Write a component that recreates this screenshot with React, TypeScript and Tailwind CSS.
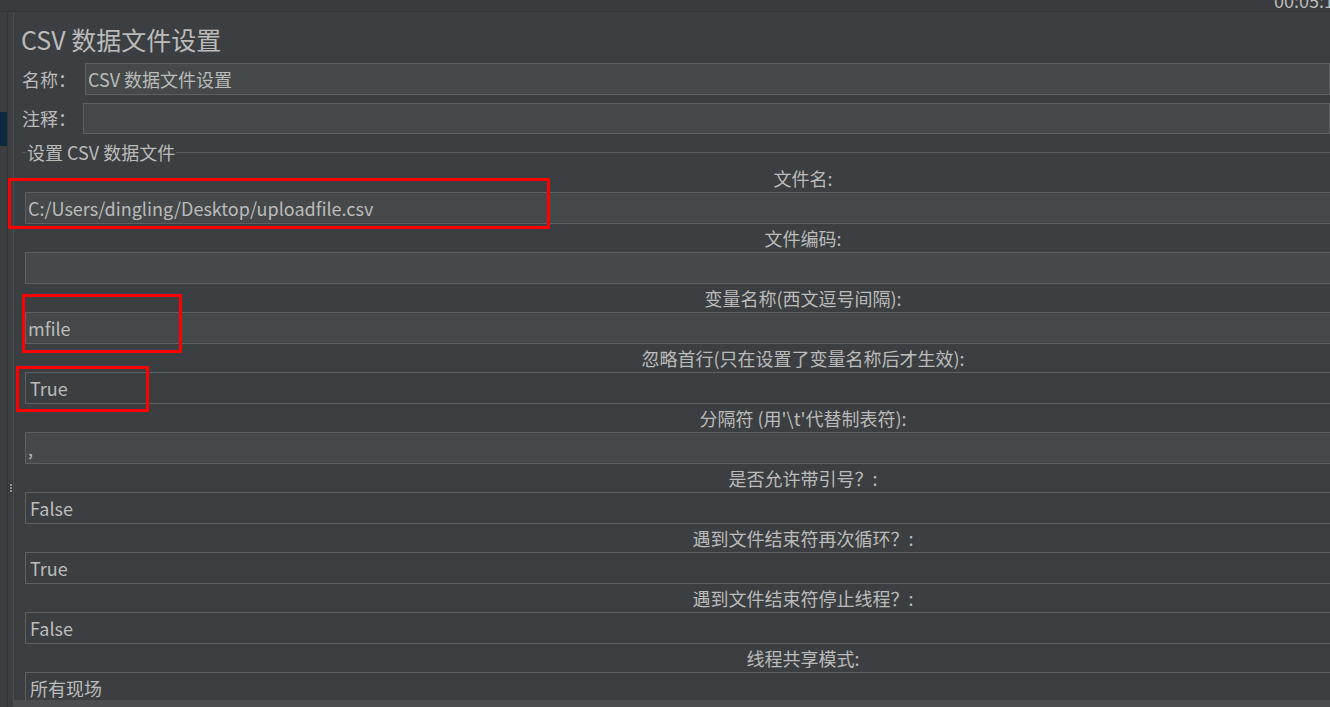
const FONT = { fontFamily: '"Noto Sans CJK SC", "Noto Sans", sans-serif' }

type Row = { label: string; value: string; kind: 'text' | 'combo' }

const ROWS: Row[] = [
  { label: '文件名:', value: 'C:/Users/dingling/Desktop/uploadfile.csv', kind: 'text' },
  { label: '文件编码:', value: '', kind: 'text' },
  { label: '变量名称(西文逗号间隔):', value: 'mfile', kind: 'text' },
  { label: '忽略首行(只在设置了变量名称后才生效):', value: 'True', kind: 'combo' },
  { label: "分隔符 (用'\\t'代替制表符):", value: ',', kind: 'text' },
  { label: '是否允许带引号？:', value: 'False', kind: 'combo' },
  { label: '遇到文件结束符再次循环？:', value: 'True', kind: 'combo' },
  { label: '遇到文件结束符停止线程？:', value: 'False', kind: 'combo' },
  { label: '线程共享模式:', value: '所有现场', kind: 'combo' },
]

function Field({ row }: { row: Row }) {
  return (
    <div className="flex flex-col">
      <div className="h-[28px] flex items-center justify-center text-[18px] text-[#bbbbbb]">{row.label}</div>
      {row.kind === 'text' ? (
        <div className="h-[32px] flex items-center pl-[2px] bg-[#45494a] border border-[#5e6162] text-[18px] text-[#bbbbbb]">
          {row.value}
        </div>
      ) : (
        <div className="h-[32px] flex items-center pl-[4px] bg-[#3c3f41] border border-[#5e6062] text-[18px] text-[#bbbbbb]">
          {row.value}
        </div>
      )}
    </div>
  )
}

export default function App() {
  return (
    <div style={FONT} className="relative w-[1330px] h-[707px] overflow-hidden bg-[#3c3f41] flex flex-col">
      <div className="h-[12px] shrink-0 bg-[#393b3e] border-b border-[#333537] flex justify-end overflow-hidden">
        <span className="mt-[-13px] mr-[-14px] text-[18px] text-[#bbbbbb]">00:05:12</span>
      </div>
      <div className="flex-1 flex min-h-0">
        <div className="w-[14px] shrink-0 flex">
          <div className="w-[7px] flex flex-col">
            <div className="h-[100px]" />
            <div className="h-[34px] bg-[#0d293e]" />
          </div>
          <div className="w-[1px] bg-[#323436]" />
          <div className="w-[5px] flex flex-col items-center">
            <div className="h-[472px]" />
            <div className="flex flex-col gap-[1px]">
              <div className="w-[2px] h-[2px] bg-[#8a8d8f]" />
              <div className="w-[2px] h-[2px] bg-[#8a8d8f]" />
              <div className="w-[2px] h-[2px] bg-[#8a8d8f]" />
            </div>
          </div>
          <div className="w-[1px] bg-[#4a4d50]" />
        </div>
        <div className="flex-1 flex flex-col min-w-0">
          <div className="flex-1 overflow-hidden pl-[7px]">
            <div className="mt-[11px] h-[32px] leading-[32px] text-[25px] text-[#bbbbbb]">CSV 数据文件设置</div>
            <div className="mt-[8px] flex items-center">
              <div className="w-[64px] pl-[1px] text-[18px] text-[#bbbbbb]">名称：</div>
              <div className="flex-1 h-[32px] flex items-center pl-[2px] bg-[#45494a] border border-[#5e6162] text-[18px] text-[#bbbbbb]">
                CSV 数据文件设置
              </div>
            </div>
            <div className="mt-[8px] flex items-center">
              <div className="w-[62px] pl-[1px] text-[18px] text-[#bbbbbb]">注释：</div>
              <div className="flex-1 h-[31px] bg-[#45494a] border border-[#5e6162]" />
            </div>
            <div className="mt-[7px] h-[22px] flex items-center pl-[1px]">
              <div className="w-[4px] h-[1px] bg-[#5a5d5f]" />
              <div className="px-[1px] text-[18px] text-[#bbbbbb] leading-[22px]">设置 CSV 数据文件</div>
              <div className="flex-1 h-[1px] bg-[#5a5d5f]" />
            </div>
            <div className="mt-[1px] ml-[4px] w-[1556px] flex flex-col">
              {ROWS.map((r) => (
                <Field key={r.label} row={r} />
              ))}
            </div>
          </div>
          <div className="h-[7px] shrink-0 bg-[#4b4e50]" />
        </div>
      </div>

      <div className="absolute left-[8px] top-[178px] w-[542px] h-[51px] border-[3px] border-[#ff0000]" />
      <div className="absolute left-[22px] top-[294px] w-[160px] h-[59px] border-[3px] border-[#ff0000]" />
      <div className="absolute left-[16px] top-[366px] w-[133px] h-[46px] border-[3px] border-[#ff0000]" />
    </div>
  )
}
